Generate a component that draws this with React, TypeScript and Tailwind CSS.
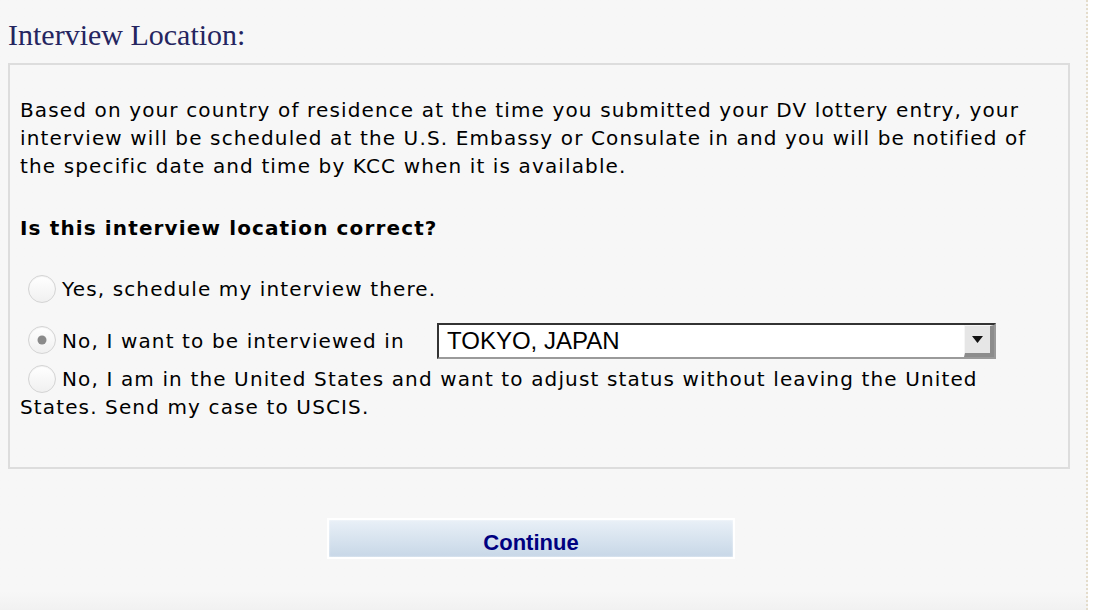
import React from "react";

function Radio({ checked = false }: { checked?: boolean }) {
  return (
    <span className="relative inline-block w-[28px] h-[28px] rounded-full border border-[#d4d4d4] bg-gradient-to-b from-[#ffffff] to-[#f0f0f0] align-middle ml-[8px] mr-[6px] -mt-[3px] shadow-[inset_0_1px_1px_rgba(0,0,0,0.05)]">
      {checked && (
        <span className="absolute left-1/2 top-1/2 -translate-x-1/2 -translate-y-1/2 w-[9px] h-[9px] rounded-full bg-[#8a8a8a]" />
      )}
    </span>
  );
}

export default function App() {
  return (
    <div className="flex w-[1102px] h-[610px] bg-white overflow-hidden">
      <div className="w-[1088px] h-full bg-[#f7f7f7] border-r-2 border-dotted border-r-[#e4dccb] pl-[8px] pr-[16px] bg-gradient-to-b from-[#f7f7f7] from-[97%] to-[#f1f1f1]">
        <h1 className="pt-[17px] h-[63px] text-[30px] leading-[36px] text-[#252560] font-['Liberation_Serif',serif]">
          Interview Location:
        </h1>
        <div className="border-2 border-[#dddddd] h-[406px] px-[10px] pt-[31px] font-['DejaVu_Sans',sans-serif] text-[20px] leading-[28px] tracking-[1.13px] text-black">
          <p>
            Based on your country of residence at the time you submitted your DV lottery entry, your
            <br />
            interview will be scheduled at the U.S. Embassy or Consulate in and you will be notified of
            <br />
            the specific date and time by KCC when it is available.
          </p>
          <p className="mt-[34px] font-bold">Is this interview location correct?</p>
          <p className="mt-[33px]">
            <Radio />
            Yes, schedule my interview there.
          </p>
          <div className="mt-[20px] flex items-center h-[36px]">
            <Radio checked />
            <span className="w-[375px] shrink-0 whitespace-nowrap">No, I want to be interviewed in</span>
            <div className="w-[559px] h-[36px] flex border-t-2 border-l-2 border-t-[#333333] border-l-[#333333] border-b-2 border-r-2 border-b-[#9a9a9a] border-r-[#9a9a9a] bg-white tracking-normal">
              <span className="flex-1 pl-[8px] font-['Liberation_Sans',Arial,sans-serif] text-[24px] leading-[32px] text-black">
                TOKYO, JAPAN
              </span>
              <span className="w-[30px] h-full flex items-center justify-center bg-[#e6e6e6] border-r-[4px] border-b-[4px] border-r-[#8c8c8c] border-b-[#8c8c8c] border-l border-t border-l-[#f6f6f6] border-t-[#f6f6f6]">
                <svg width="11" height="7" viewBox="0 0 11 7">
                  <polygon points="0,0 11,0 5.5,7" fill="#111" />
                </svg>
              </span>
            </div>
          </div>
          <p className="mt-[6px]">
            <Radio />
            No, I am in the United States and want to adjust status without leaving the United
            <br />
            States. Send my case to USCIS.
          </p>
        </div>
        <div className="flex justify-center pt-[49px]">
          <button className="w-[408px] h-[41px] flex items-start justify-center pt-[9px] border-2 border-white bg-gradient-to-b from-[#e9f0f7] to-[#c7d7e7] shadow-[inset_0_0_2px_rgba(255,255,255,0.9)] font-['Liberation_Sans',Arial,sans-serif] font-bold text-[22px] leading-[28px] text-[#000080] -translate-x-[8px]">
            Continue
          </button>
        </div>
      </div>
    </div>
  );
}
